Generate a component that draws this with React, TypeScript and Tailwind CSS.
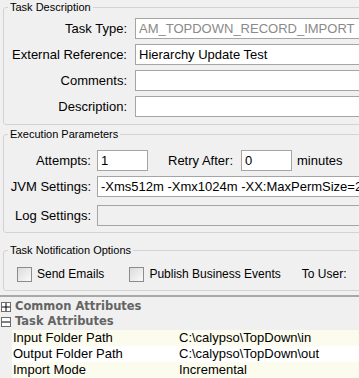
import React from "react";

const font = { fontFamily: '"Liberation Sans", Arial, sans-serif' };

function Field({ value, muted, disabled, className }: { value?: string; muted?: boolean; disabled?: boolean; className: string }) {
  return (
    <div
      className={`flex h-[21px] items-center overflow-hidden whitespace-nowrap border border-[#a5a5a5] px-[3px] text-[13px] ${
        disabled ? "bg-[#f0f0f0]" : "bg-white"
      } ${muted ? "text-[#8a8a8a]" : "text-black"} ${className}`}
    >
      {value}
    </div>
  );
}

function Check({ label }: { label: string }) {
  return (
    <label className="flex items-center gap-[5px] text-[12px]">
      <span className="h-[15px] w-[15px] border border-[#8c8c8c] bg-gradient-to-br from-[#dcdcdc] to-[#fafafa]" />
      {label}
    </label>
  );
}

function TreeHeader({ sign, label, className }: { sign: string; label: string; className: string }) {
  return (
    <div className={`flex items-center gap-[4px] pl-px ${className}`}>
      <span className="flex h-[10px] w-[10px] items-center justify-center border border-[#6b6b6b] bg-white">
        <svg width="8" height="8" viewBox="0 0 8 8">
          <path d={sign === "+" ? "M0 4h8M4 0v8" : "M0 4h8"} stroke="#000" strokeWidth="1" />
        </svg>
      </span>
      <span className="font-bold text-[#646464]" style={{ fontFamily: '"DejaVu Sans", Verdana, sans-serif', fontSize: 11.5 }}>
        {label}
      </span>
    </div>
  );
}

const rows = [
  ["Input Folder Path", "C:\\calypso\\TopDown\\in"],
  ["Output Folder Path", "C:\\calypso\\TopDown\\out"],
  ["Import Mode", "Incremental"],
];

export default function App() {
  return (
    <div className="h-[378px] w-[359px] overflow-hidden bg-[#f0f0f0] text-black" style={font}>
      <div className="w-[440px]">
        <fieldset className="ml-[3px] rounded-[3px] border border-[#d3d3d3] pb-[7px]">
          <legend className="ml-[4px] px-[2px] text-[11px] leading-[14px]">Task Description</legend>
          <div className="mt-[4px] flex flex-col gap-[5px]">
            {[
              ["Task Type:", "AM_TOPDOWN_RECORD_IMPORT", true],
              ["External Reference:", "Hierarchy Update Test", false],
              ["Comments:", "", false],
              ["Description:", "", false],
            ].map(([l, v, m]) => (
              <div key={l as string} className="flex items-center">
                <span className="w-[123px] text-right text-[13px]">{l as string}</span>
                <Field value={v as string} muted={m as boolean} className="ml-[8px] w-[300px]" />
              </div>
            ))}
          </div>
        </fieldset>

        <fieldset className="ml-[3px] mt-[2px] rounded-[3px] border border-[#d3d3d3] pb-[6px]">
          <legend className="ml-[4px] px-[2px] text-[11px] leading-[14px]">Execution Parameters</legend>
          <div className="mt-[9px] flex flex-col gap-[5px]">
            <div className="flex items-center">
              <span className="w-[87px] text-right text-[13px]">Attempts:</span>
              <Field value="1" className="ml-[6px] w-[51px]" />
              <span className="ml-[20px] text-[13px]">Retry After:</span>
              <Field value="0" className="ml-[8px] w-[51px]" />
              <span className="ml-[5px] text-[13px]">minutes</span>
            </div>
            <div className="flex items-center">
              <span className="w-[87px] text-right text-[13px]">JVM Settings:</span>
              <Field value="-Xms512m -Xmx1024m -XX:MaxPermSize=256m" className="ml-[6px] w-[320px]" />
            </div>
            <div className="mt-[3px] flex items-center">
              <span className="w-[87px] text-right text-[13px]">Log Settings:</span>
              <Field disabled className="ml-[6px] w-[320px]" />
            </div>
          </div>
        </fieldset>

        <fieldset className="ml-[3px] mt-[10px] rounded-[3px] border border-[#d3d3d3] pb-[7px]">
          <legend className="ml-[4px] px-[2px] text-[11px] leading-[14px]">Task Notification Options</legend>
          <div className="ml-[13px] mt-[8px] flex items-center">
            <Check label="Send Emails" />
            <div className="ml-[25px]">
              <Check label="Publish Business Events" />
            </div>
            <span className="ml-[21px] text-[12px]">To User:</span>
          </div>
        </fieldset>

        <div className="mt-[4px] border-t-2 border-[#a8a8a8]">
          <TreeHeader sign="+" label="Common Attributes" className="h-[17px] pt-[2px]" />
          <TreeHeader sign="-" label="Task Attributes" className="h-[16px]" />
          <div className="ml-[12px] text-[13px]">
            {rows.map(([k, v], i) => (
              <div key={k} className={`flex h-[16px] items-center ${i % 2 === 0 ? "bg-[#fbfbee]" : "bg-white"}`}>
                <span className="w-[167px] pl-px">{k}</span>
                <span>{v}</span>
              </div>
            ))}
          </div>
        </div>
      </div>
    </div>
  );
}
